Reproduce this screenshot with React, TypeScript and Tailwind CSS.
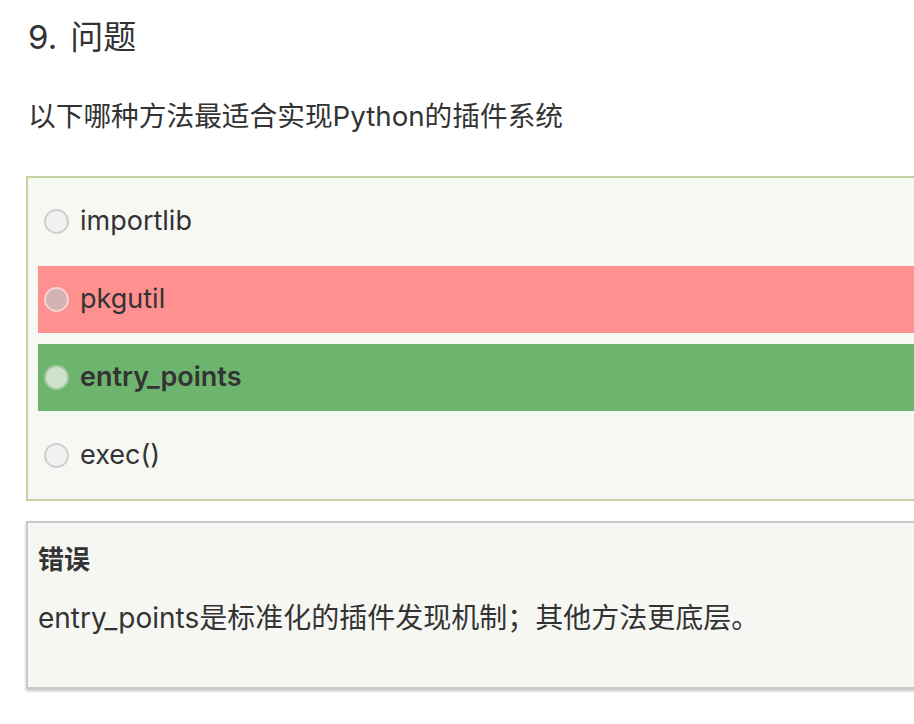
const options = [
  { label: "importlib", state: "none" },
  { label: "pkgutil", state: "wrong" },
  { label: "entry_points", state: "right" },
  { label: "exec()", state: "none" },
];

function Radio({ state }: { state: string }) {
  const cls =
    state === "wrong"
      ? "bg-[#d2b4b4] border-[#f6d2d2]"
      : state === "right"
      ? "bg-[#d0e1cd] border-[#a6c8a3]"
      : "bg-[#f1f1f1] border-[#cfcfcf]";
  return <span className={`w-[25px] h-[25px] rounded-full border-2 shrink-0 ${cls}`} />;
}

export default function App() {
  return (
    <div className="w-[914px] h-[724px] overflow-hidden bg-white pl-[26px] text-[#333] font-['Inter','Noto_Sans_CJK_SC',sans-serif]">
      <h1 className="pt-[18px] pl-[2px] text-[33px] leading-[38px] font-normal flex">
        <span>9.</span>
        <span className="ml-[13px]">问题</span>
      </h1>
      <p className="mt-[42px] pl-[2px] text-[27.7px] leading-[36px]">以下哪种方法最适合实现Python的插件系统</p>

      <div className="mt-[42px] w-[1000px] border-2 border-[#c4d3a0] bg-[#f6f8f3] p-[10px] flex flex-col gap-[11px]">
        {options.map((o) => (
          <div
            key={o.label}
            className={`h-[67px] flex items-center gap-[11px] pl-[6px] text-[27px] ${
              o.state === "wrong" ? "bg-[#ff9090]" : o.state === "right" ? "bg-[#6db46f] font-semibold" : ""
            }`}
          >
            <Radio state={o.state} />
            <span>{o.label}</span>
          </div>
        ))}
      </div>

      <div className="mt-[20px] w-[1000px] h-[168px] border-2 border-[#c9c9c9] bg-[#f6f7f3] shadow-[0_2px_3px_rgba(0,0,0,0.25)] pl-[10px] pt-[19px]">
        <div className="text-[26px] leading-[36px] font-bold">错误</div>
        <p className="mt-[22px] text-[28px] leading-[36px]">entry_points是标准化的插件发现机制；其他方法更底层。</p>
      </div>
    </div>
  );
}
